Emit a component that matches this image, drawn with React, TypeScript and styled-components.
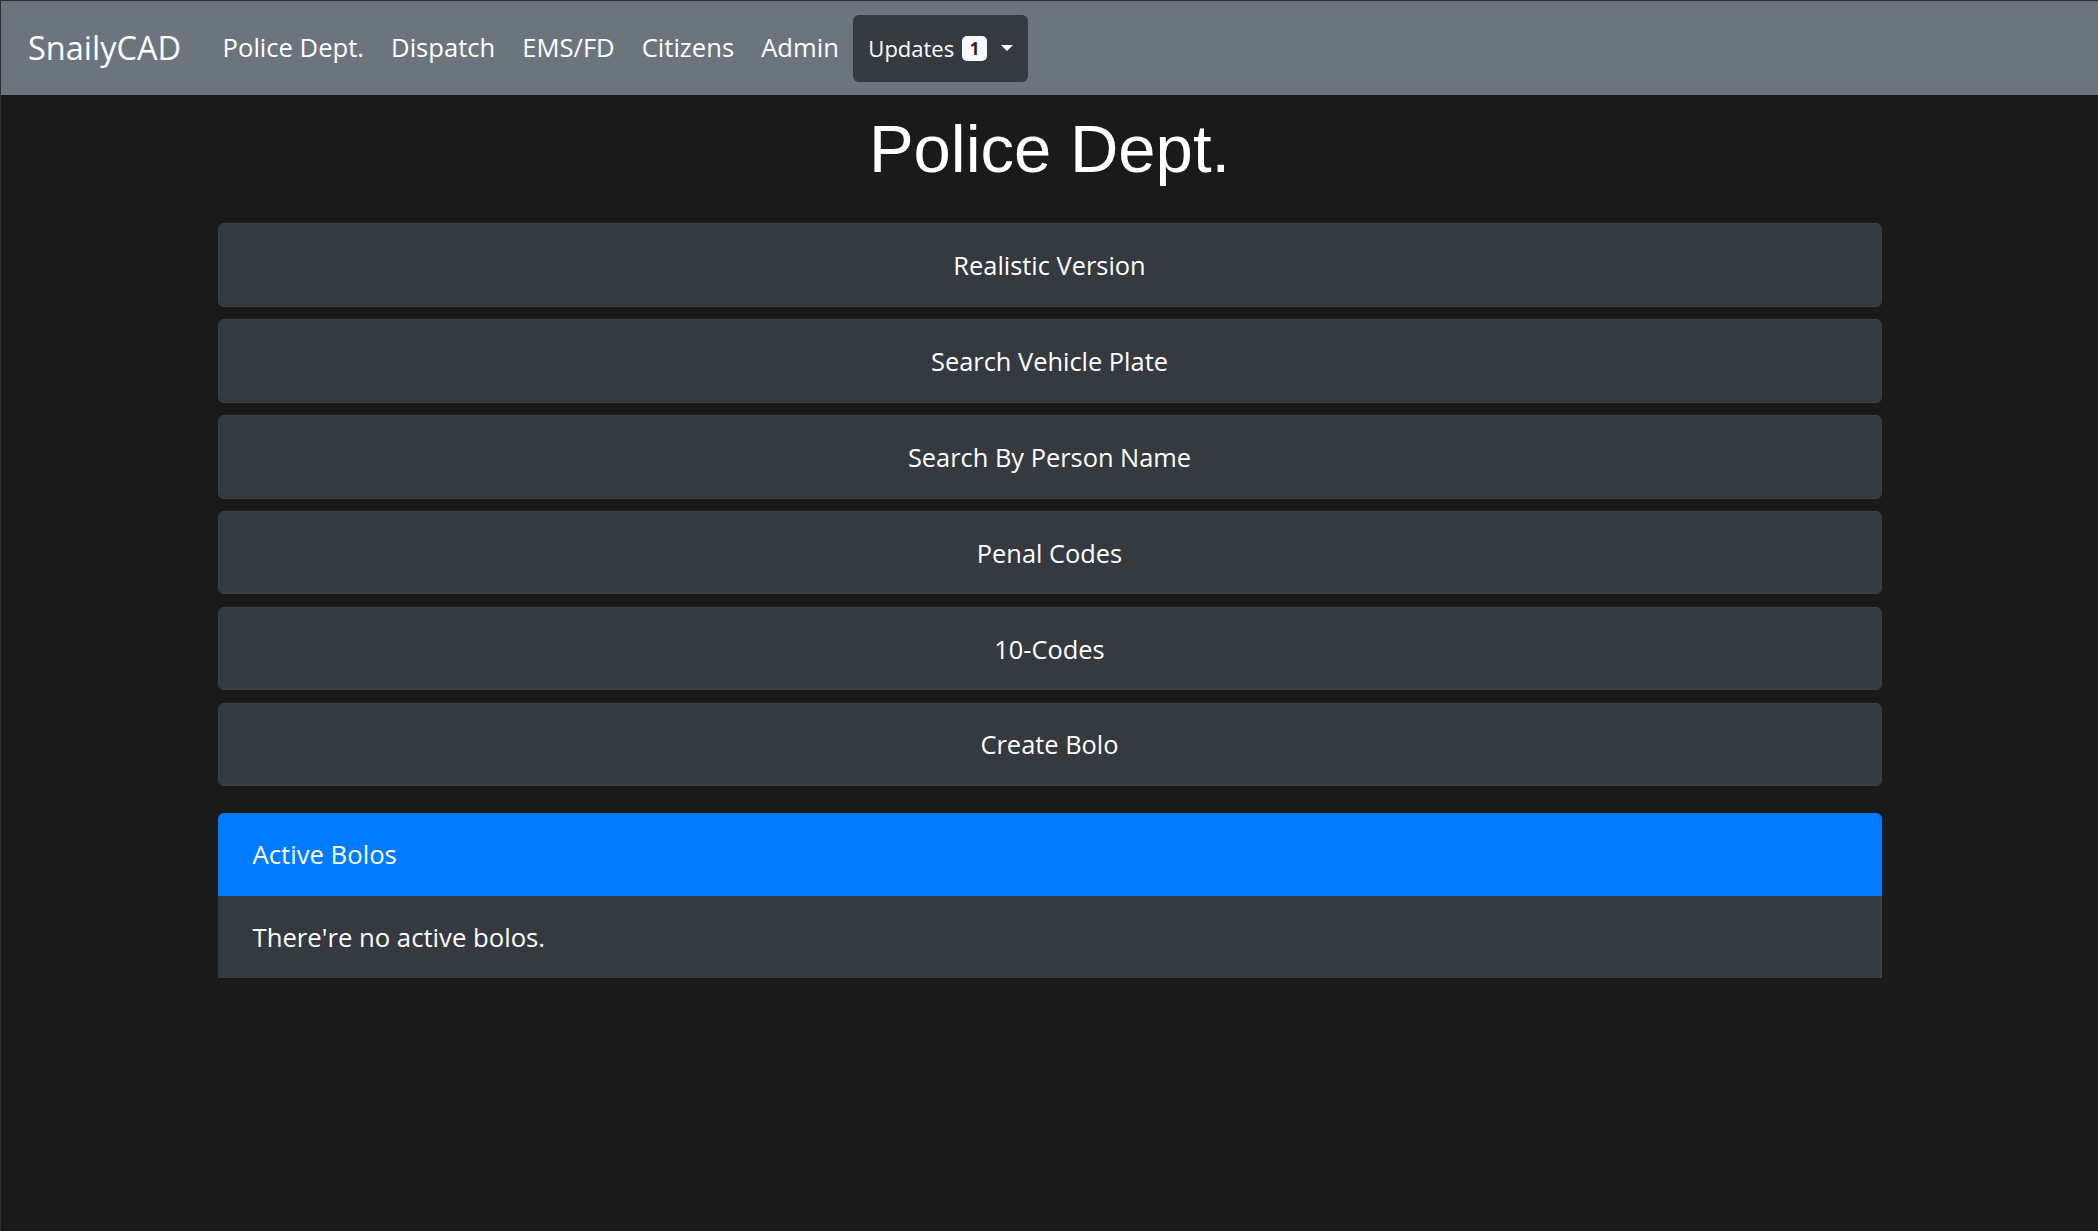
import React from "react";
import styled, { createGlobalStyle } from "styled-components";

const GlobalStyle = createGlobalStyle`
  html, body {
    margin: 0;
    padding: 0;
    background: #1a1a1a;
  }
  body {
    font-family: "Open Sans", "Noto Sans", sans-serif;
    color: #f8f9fa;
  }
  * { box-sizing: border-box; }
`;

const Page = styled.div`
  min-height: 1231px;
  background: #1a1a1a;
  border-top: 1px solid #2e2e2e;
  border-left: 1px solid #2e2e2e;
`;

const Navbar = styled.nav`
  height: 94px;
  background: #6c757d;
  display: flex;
  align-items: center;
  padding: 0 27px;
`;

const Brand = styled.a`
  font-size: 32.5px;
  color: #fff;
  text-decoration: none;
  margin-right: 28px;
  line-height: 1.5;
`;

const NavList = styled.div`
  display: flex;
  align-items: center;
`;

const NavLink = styled.a`
  font-size: 25.6px;
  color: #fff;
  text-decoration: none;
  padding: 0 13.5px;
  line-height: 1.5;
`;

const Dropdown = styled.button`
  display: flex;
  align-items: center;
  height: 67px;
  padding: 0 15px;
  margin-left: 1px;
  background: #343a40;
  border: none;
  border-radius: 6px;
  color: #fff;
  font-family: "Open Sans", "Noto Sans", sans-serif;
  font-size: 22px;
  cursor: pointer;
`;

const Badge = styled.span`
  display: inline-flex;
  align-items: center;
  justify-content: center;
  width: 25px;
  height: 25px;
  margin-left: 8px;
  border-radius: 5px;
  background: #f8f9fa;
  color: #212529;
  font-size: 17px;
  font-weight: 700;
`;

const Caret = styled.span`
  display: inline-block;
  margin-left: 14px;
  width: 0;
  height: 0;
  border-top: 6px solid #fff;
  border-left: 6px solid transparent;
  border-right: 6px solid transparent;
`;

const Container = styled.main`
  width: 1664px;
  margin: 0 auto;
  display: flex;
  flex-direction: column;
`;

const Title = styled.h1`
  font-family: "Liberation Sans", Arial, sans-serif;
  font-weight: 400;
  font-size: 67px;
  line-height: 1.2;
  text-align: center;
  margin: 14px 0 34px;
  color: #fff;
`;

const ButtonList = styled.div`
  display: flex;
  flex-direction: column;
  gap: 12.36px;
`;

const ActionButton = styled.button`
  height: 83.5px;
  width: 100%;
  display: flex;
  align-items: center;
  justify-content: center;
  background: #343a40;
  border: 1px solid #3b4148;
  border-radius: 6px;
  color: #fff;
  font-family: "Open Sans", "Noto Sans", sans-serif;
  font-size: 25.4px;
  cursor: pointer;
`;

const Card = styled.section`
  margin-top: 27px;
  display: flex;
  flex-direction: column;
`;

const CardHeader = styled.div`
  height: 83px;
  display: flex;
  align-items: center;
  padding: 0 35px;
  background: #007bff;
  border-radius: 6px 6px 0 0;
  font-size: 25.7px;
  color: #fff;
`;

const CardBody = styled.div`
  height: 82px;
  display: flex;
  align-items: center;
  padding: 0 35px;
  background: #343a40;
  border-right: 2px solid #3a4047;
  font-size: 25.7px;
  color: #fff;
`;

const navItems = ["Police Dept.", "Dispatch", "EMS/FD", "Citizens", "Admin"];
const actions = [
  "Realistic Version",
  "Search Vehicle Plate",
  "Search By Person Name",
  "Penal Codes",
  "10-Codes",
  "Create Bolo",
];

export default function App() {
  return (
    <>
      <GlobalStyle />
      <Page>
        <Navbar>
          <Brand href="#">SnailyCAD</Brand>
          <NavList>
            {navItems.map((n) => (
              <NavLink key={n} href="#">
                {n}
              </NavLink>
            ))}
            <Dropdown>
              Updates
              <Badge>1</Badge>
              <Caret />
            </Dropdown>
          </NavList>
        </Navbar>
        <Container>
          <Title>Police Dept.</Title>
          <ButtonList>
            {actions.map((a) => (
              <ActionButton key={a}>{a}</ActionButton>
            ))}
          </ButtonList>
          <Card>
            <CardHeader>Active Bolos</CardHeader>
            <CardBody>There're no active bolos.</CardBody>
          </Card>
        </Container>
      </Page>
    </>
  );
}
